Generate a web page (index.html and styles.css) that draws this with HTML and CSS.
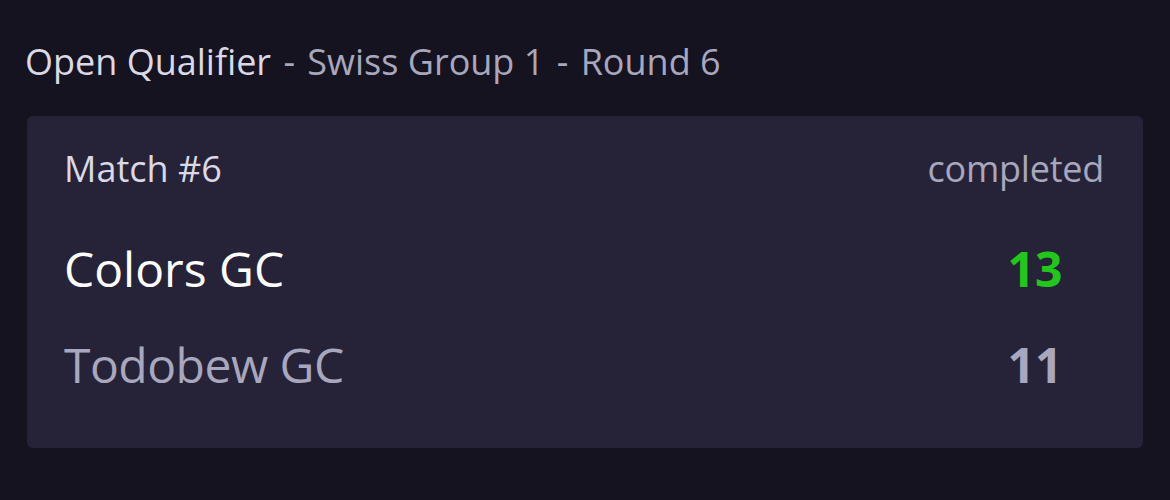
FILE: index.html
```html
<!DOCTYPE html>
<html>
<head>
<meta charset="utf-8">
<link rel="stylesheet" href="styles.css">
</head>
<body>
<div class="page">
  <h1 class="title"><span class="event">Open Qualifier</span><span class="sep"> - </span><span class="sub">Swiss Group 1</span><span class="sep"> - </span><span class="sub">Round 6</span></h1>
  <div class="card">
    <div class="card-head">
      <span class="match">Match #6</span>
      <span class="status">completed</span>
    </div>
    <div class="team win">
      <span class="name">Colors GC</span>
      <span class="score">13</span>
    </div>
    <div class="team loss">
      <span class="name">Todobew GC</span>
      <span class="score">11</span>
    </div>
  </div>
</div>
</body>
</html>
```
FILE: styles.css
```css
html, body {
  margin: 0;
  padding: 0;
  background: #15131f;
  font-family: "Open Sans", "Noto Sans", sans-serif;
}
.page {
  padding: 37px 27px 0 27px;
  width: 1116px;
}
.title {
  margin: 0 0 0 -2px;
  font-size: 36px;
  font-weight: 400;
  line-height: 50px;
  color: #a8a7bd;
  white-space: pre;
}
.title .event { color: #dad9e5; }
.title .sep { margin: 0 3px; }
.card {
  margin-top: 29px;
  background: #262339;
  border-radius: 6px;
  height: 332px;
  box-sizing: border-box;
  padding: 31px 39px 0 37px;
}
.card-head {
  display: flex;
  justify-content: space-between;
  align-items: baseline;
  font-size: 36px;
  line-height: 44px;
}
.match { color: #dad9e5; }
.status { color: #a8a7bd; letter-spacing: -0.25px; }
.team {
  display: flex;
  justify-content: space-between;
  align-items: baseline;
  font-size: 48px;
  line-height: 60px;
}
.team.win { margin-top: 48px; }
.team.loss { margin-top: 36px; }
.win .name { color: #ffffff; }
.loss .name { color: #a8a7bd; letter-spacing: -0.5px; }
.score {
  width: 80px;
  margin-right: 29px;
  text-align: center;
  font-weight: 700;
  letter-spacing: 0;
}
.win .score { color: #22c71c; }
.loss .score { color: #a8a7bd; }
```
